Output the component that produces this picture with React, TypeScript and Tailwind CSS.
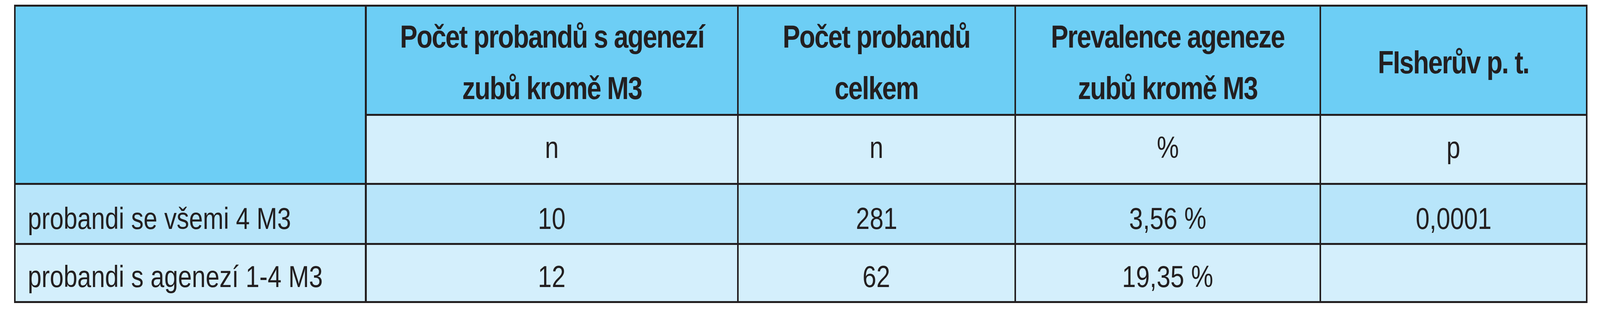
import React from 'react';

// Table: prevalence of tooth agenesis (excluding M3)
// Widths follow the window width (vw), heights are in px of the 800 px frame.
// Text is set in px and narrowed a little, as the original uses a condensed face.

const font = { fontFamily: '"Liberation Sans", Arial, sans-serif' };

const headCell =
  'flex items-center justify-center pt-[10px] text-center font-bold text-[82px] leading-[132px] tracking-[-2.5px] whitespace-nowrap bg-[#6dcef5]';
const unitCell =
  'flex items-center justify-center pb-[10px] bg-[#d4effc] text-[78px] leading-[78px]';
const narrow = 'inline-block scale-x-[0.814] origin-center';

const rows = [
  { label: 'probandi se všemi 4 M3', values: ['10', '281', '3,56 %', '0,0001'], bg: 'bg-[#b8e5fa]', pad: 'pt-[23px]' },
  { label: 'probandi s agenezí 1-4 M3', values: ['12', '62', '19,35 %', ''], bg: 'bg-[#d4effc]', pad: 'pt-[18px]' },
];

export default function App() {
  return (
    <div className="min-h-screen w-full bg-white pt-[12px] pl-[0.874vw] pr-[0.775vw]">
      <div
        className="grid w-full gap-x-[0.1vw] gap-y-[5px] bg-[#231f20] py-[5px] px-[0.1vw] text-[#231f20] grid-cols-[minmax(0,1099fr)_minmax(0,1165fr)_minmax(0,867fr)_minmax(0,955fr)_minmax(0,833fr)] grid-rows-[275px_172px_149px_144px]"
        style={font}
      >
        {/* Header */}
        <div className="row-span-2 bg-[#6dcef5]" />
        <div className={headCell}>
          <span className={narrow}>
            Počet probandů s agenezí
            <br />
            zubů kromě M3
          </span>
        </div>
        <div className={headCell}>
          <span className={narrow}>
            Počet probandů
            <br />
            celkem
          </span>
        </div>
        <div className={headCell}>
          <span className={narrow}>
            Prevalence ageneze
            <br />
            zubů kromě M3
          </span>
        </div>
        <div className={headCell}>
          <span className={narrow}>FIsherův p. t.</span>
        </div>

        {/* Units */}
        <div className={unitCell}><span className={narrow}>n</span></div>
        <div className={unitCell}><span className={narrow}>n</span></div>
        <div className={unitCell}><span className={narrow}>%</span></div>
        <div className={unitCell}><span className={narrow}>p</span></div>

        {/* Data rows */}
        {rows.map((row) => (
          <React.Fragment key={row.label}>
            <div className={`flex items-center pl-[0.755vw] text-[78px] leading-[78px] whitespace-nowrap ${row.bg} ${row.pad}`}>
              <span className="inline-block origin-left scale-x-[0.814]">{row.label}</span>
            </div>
            {row.values.map((v, i) => (
              <div
                key={i}
                className={`flex items-center justify-center text-[78px] leading-[78px] whitespace-nowrap ${row.bg} ${row.pad}`}
              >
                <span className={narrow}>{v}</span>
              </div>
            ))}
          </React.Fragment>
        ))}
      </div>
    </div>
  );
}
